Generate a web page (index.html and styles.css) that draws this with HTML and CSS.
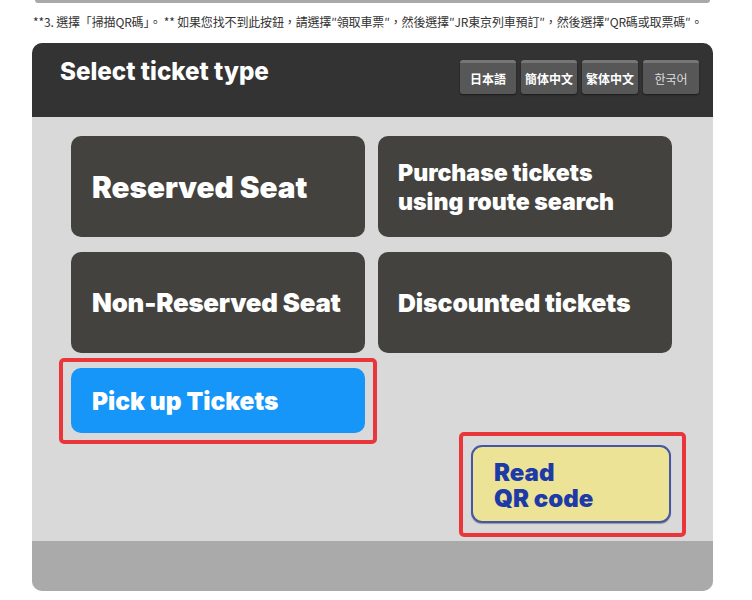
FILE: index.html
```html
<!DOCTYPE html>
<html lang="zh-Hant">
<head>
<meta charset="utf-8">
<title>Select ticket type</title>
<link rel="stylesheet" href="styles.css">
</head>
<body>
<div class="page">
  <div class="topbar"></div>
  <p class="note">**3. 選擇「掃描QR碼」。 ** 如果您找不到此按鈕，請選擇″領取車票″，然後選擇″JR東京列車預訂″，然後選擇″QR碼或取票碼″。</p>
  <div class="panel">
    <div class="header">
      <h1 class="title">Select ticket type</h1>
      <div class="langs">
        <span class="lang">日本語</span>
        <span class="lang">簡体中文</span>
        <span class="lang">繁体中文</span>
        <span class="lang lang-ko">한국어</span>
      </div>
    </div>
    <div class="body">
      <div class="grid">
        <div class="card card-lg">Reserved Seat</div>
        <div class="card card-sm">Purchase tickets<br>using route search</div>
        <div class="card card-md">Non-Reserved Seat</div>
        <div class="card card-sm2">Discounted tickets</div>
        <div class="pickup-frame">
          <div class="pickup">Pick up Tickets</div>
        </div>
      </div>
      <div class="qr-row">
        <div class="qr-frame">
          <div class="qr">Read<br>QR code</div>
        </div>
      </div>
    </div>
    <div class="footer"></div>
  </div>
</div>
</body>
</html>
```

FILE: styles.css
```css
* { box-sizing: border-box; }
html, body { margin: 0; padding: 0; background: #fff; }
body { font-family: Inter, "Noto Sans", "Noto Sans CJK TC", sans-serif; }
.page { padding: 0 39px 0 32px; }
.topbar {
  height: 3px;
  margin: 0 3px 0 3px;
  background: #a9a9a9;
  border-radius: 0 0 4px 4px;
}
.note {
  margin: 12px 0 0 1px;
  font-family: "Noto Sans CJK TC", "Noto Sans", sans-serif;
  font-size: 12px;
  line-height: 14px;
  color: #333;
  white-space: nowrap;
  letter-spacing: -0.15px;
}
.panel {
  margin-top: 14px;
  width: 681px;
  border-radius: 10px;
  overflow: hidden;
  background: #d9d9d9;
}
.header {
  height: 74px;
  background: #333;
  display: flex;
  justify-content: space-between;
  align-items: flex-start;
  padding: 16px 14px 0 28px;
}
.title {
  margin: 0;
  color: #fff;
  font-size: 24.2px;
  font-weight: 800;
  line-height: 26px;
}
.langs { display: flex; gap: 5px; margin-top: 1px; }
.lang {
  width: 56px;
  height: 34px;
  background: #575757;
  border-top: 3px solid #767676;
  border-radius: 3px;
  box-shadow: 0 1px 2px rgba(0,0,0,0.5);
  color: #fff;
  font-family: "Noto Sans CJK JP", sans-serif;
  font-size: 12px;
  font-weight: 700;
  display: flex;
  align-items: center;
  justify-content: center;
  padding-bottom: 1px;
}
.lang-ko { font-weight: 400; color: #ddd; font-family: "Noto Sans CJK KR", sans-serif; }
.body { padding: 19px 0 4px 39px; }
.grid {
  display: grid;
  grid-template-columns: 294px 294px;
  grid-template-rows: 101px 101px 65px;
  column-gap: 13px;
  row-gap: 15px;
}
.card {
  background: #43423e;
  border-radius: 10px;
  color: #fff;
  font-weight: 900;
  display: flex;
  align-items: center;
  padding-left: 21px;
}
.card-lg { font-size: 29.7px; }
.card-md { font-size: 25.8px; letter-spacing: -0.2px; }
.card-sm { font-size: 23.1px; line-height: 29px; padding-left: 20px; padding-top: 3px; }
.card-sm2 { font-size: 24.8px; padding-left: 20px; letter-spacing: -0.1px; }
.pickup-frame {
  margin: -10px -12px -11px -12px;
  border: 4px solid #e8363a;
  border-radius: 5px;
  padding: 6px 8px 7px 8px;
  display: flex;
}
.pickup {
  flex: 1;
  background: #1596f8;
  border-radius: 10px;
  color: #fff;
  font-size: 24.5px;
  font-weight: 900;
  display: flex;
  align-items: center;
  padding-left: 21px;
}
.qr-row {
  display: flex;
  justify-content: flex-end;
  margin-top: -1px;
  margin-right: 27px;
}
.qr-frame {
  border: 4px solid #e8363a;
  border-radius: 5px;
  padding: 9px 11px 10px 8px;
}
.qr {
  width: 200px;
  height: 78px;
  background: #ede397;
  border: 2px solid #4556a6;
  border-radius: 11px;
  box-shadow: 0 1px 1px rgba(0,0,0,0.3);
  color: #1e3aa6;
  font-size: 24px;
  font-weight: 900;
  line-height: 26px;
  padding: 13px 0 0 21px;
}
.footer { height: 50px; background: #aaa; }
```
